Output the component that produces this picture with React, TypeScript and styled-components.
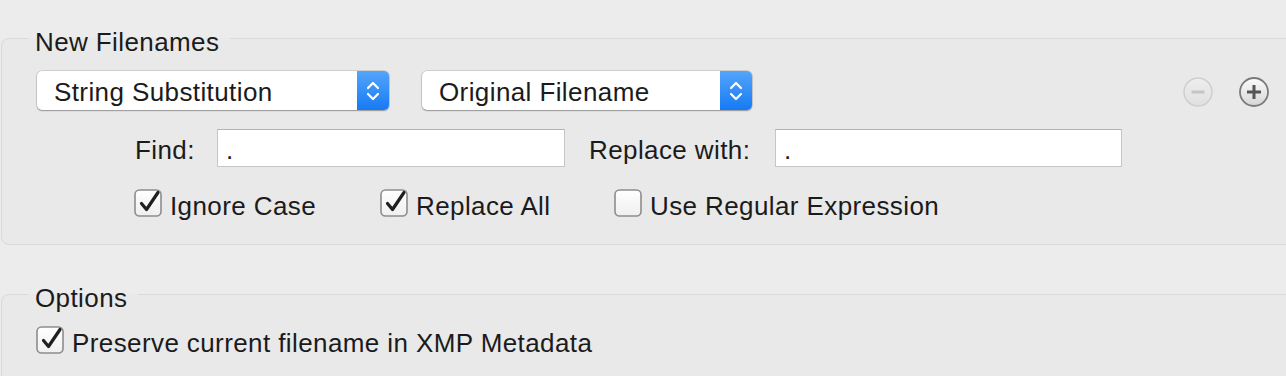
import React from 'react';
import styled, { createGlobalStyle } from 'styled-components';

const GlobalStyle = createGlobalStyle`
  html, body {
    margin: 0;
    padding: 0;
    background: #ececec;
  }
  body {
    font-family: "Liberation Sans", Arial, sans-serif;
    color: #1b1b1b;
  }
`;

const Window = styled.div`
  width: 1286px;
  height: 376px;
  overflow: hidden;
  box-sizing: border-box;
  padding: 20px 0 0 1px;
  font-size: 26px;
  letter-spacing: 0.4px;
`;

const Group = styled.fieldset<{ $top?: number }>`
  margin: ${p => p.$top ?? 0}px -24px 0 0;
  padding: 0;
  min-width: 0;
  border: 1px solid #d9d9d9;
  border-radius: 8px;
  background: #e9e9e9;
`;

const Legend = styled.legend`
  margin-left: 26px;
  padding: 7px 11px 0 7px;
  line-height: 30px;
  font-size: 26px;
`;

const Content = styled.div<{ $pad: string }>`
  display: flex;
  flex-direction: column;
  padding: ${p => p.$pad};
`;

const Row = styled.div<{ $top?: number; $left?: number }>`
  display: flex;
  align-items: center;
  margin-top: ${p => p.$top ?? 0}px;
  margin-left: ${p => p.$left ?? 0}px;
`;

const Popup = styled.button<{ $width: number }>`
  width: ${p => p.$width}px;
  height: 39px;
  flex: none;
  display: flex;
  align-items: stretch;
  margin: 0 33px 0 0;
  padding: 0;
  border: none;
  border-radius: 5px;
  background: #fff;
  box-shadow: 0 0 0 0.5px rgba(0, 0, 0, 0.22), 0 1px 1.5px rgba(0, 0, 0, 0.28);
  font: inherit;
  letter-spacing: inherit;
  color: inherit;
  overflow: hidden;
  cursor: default;
`;

const PopupLabel = styled.span`
  flex: 1;
  text-align: left;
  padding: 4px 0 0 17px;
  line-height: 35px;
  white-space: nowrap;
`;

const PopupArrows = styled.span`
  width: 32px;
  flex: none;
  display: flex;
  align-items: center;
  justify-content: center;
  background: linear-gradient(#54a5fb, #167af4);
`;

const RoundButtons = styled.div`
  margin-left: auto;
  margin-top: 3px;
  display: flex;
  gap: 26px;
`;

const RoundButton = styled.button`
  width: 30px;
  height: 30px;
  padding: 0;
  border: none;
  background: none;
  display: block;
  cursor: default;
`;

const FieldLabel = styled.label<{ $width: number }>`
  width: ${p => p.$width}px;
  flex: none;
  padding-top: 4px;
  line-height: 34px;
  white-space: nowrap;
`;

const TextField = styled.input<{ $width: number }>`
  width: ${p => p.$width}px;
  height: 38px;
  flex: none;
  box-sizing: border-box;
  margin: 0 24px 0 0;
  padding: 5px 8px 0;
  border: 1px solid #c6c6c6;
  border-top-color: #b4b4b4;
  background: #fff;
  font: inherit;
  letter-spacing: inherit;
  color: inherit;
  outline: none;
`;

const CheckItem = styled.label<{ $width?: number }>`
  display: flex;
  align-items: center;
  gap: 8px;
  width: ${p => (p.$width ? `${p.$width}px` : 'auto')};
  flex: none;
  white-space: nowrap;
`;

const CheckText = styled.span`
  padding-top: 3px;
  margin-bottom: -3px;
  line-height: 28px;
`;

const Box = styled.svg`
  display: block;
  flex: none;
  overflow: visible;
`;

const Chevrons = () => (
  <svg width="14" height="20" viewBox="0 0 14 20">
    <polyline points="2,7 7,2 12,7" fill="none" stroke="#fff" strokeWidth="2.2" strokeLinecap="round" strokeLinejoin="round" />
    <polyline points="2,13 7,18 12,13" fill="none" stroke="#fff" strokeWidth="2.2" strokeLinecap="round" strokeLinejoin="round" />
  </svg>
);

const Select = ({ width, value }: { width: number; value: string }) => (
  <Popup $width={width}>
    <PopupLabel>{value}</PopupLabel>
    <PopupArrows>
      <Chevrons />
    </PopupArrows>
  </Popup>
);

const Check = ({ checked, label, width }: { checked: boolean; label: string; width?: number }) => (
  <CheckItem $width={width}>
    <Box width="28" height="28" viewBox="0 0 28 28">
      <defs>
        <linearGradient id="cbFill" x1="0" y1="0" x2="0" y2="1">
          <stop offset="0" stopColor="#ffffff" />
          <stop offset="1" stopColor="#efefef" />
        </linearGradient>
      </defs>
      <rect x="1" y="1" width="26" height="26" rx="4.5" fill="url(#cbFill)" stroke="#8d8d8d" strokeWidth="1.6" />
      {checked && (
        <path d="M7.5 14.5 L12.5 20.5 L24 3.5" fill="none" stroke="#1f1f1f" strokeWidth="3.2" strokeLinecap="round" strokeLinejoin="round" />
      )}
    </Box>
    <CheckText>{label}</CheckText>
  </CheckItem>
);

const MinusIcon = () => (
  <Box width="30" height="30" viewBox="0 0 30 30">
    <defs>
      <linearGradient id="minusFill" x1="0" y1="0" x2="0" y2="1">
        <stop offset="0" stopColor="#eeeeee" />
        <stop offset="1" stopColor="#e0e0e0" />
      </linearGradient>
    </defs>
    <circle cx="15" cy="15" r="14" fill="url(#minusFill)" stroke="#cfcfcf" strokeWidth="1.5" />
    <line x1="8.5" y1="15" x2="21.5" y2="15" stroke="#c4c4c4" strokeWidth="3" />
  </Box>
);

const PlusIcon = () => (
  <Box width="30" height="30" viewBox="0 0 30 30">
    <defs>
      <linearGradient id="plusFill" x1="0" y1="0" x2="0" y2="1">
        <stop offset="0" stopColor="#fbfbfb" />
        <stop offset="1" stopColor="#d6d6d6" />
      </linearGradient>
    </defs>
    <circle cx="15" cy="15" r="14" fill="url(#plusFill)" stroke="#7b7b7b" strokeWidth="1.8" />
    <line x1="8" y1="15" x2="22" y2="15" stroke="#555" strokeWidth="3" />
    <line x1="15" y1="8" x2="15" y2="22" stroke="#555" strokeWidth="3" />
  </Box>
);

export default function App() {
  return (
    <>
      <GlobalStyle />
      <Window>
        <Group>
          <Legend>New Filenames</Legend>
          <Content $pad="14px 40px 27px 35px">
            <Row>
              <Select width={352} value="String Substitution" />
              <Select width={330} value="Original Filename" />
              <RoundButtons>
                <RoundButton aria-label="Remove" disabled>
                  <MinusIcon />
                </RoundButton>
                <RoundButton aria-label="Add">
                  <PlusIcon />
                </RoundButton>
              </RoundButtons>
            </Row>
            <Row $top={19} $left={98}>
              <FieldLabel $width={82}>Find:</FieldLabel>
              <TextField $width={348} defaultValue="." />
              <FieldLabel $width={186}>Replace with:</FieldLabel>
              <TextField $width={347} defaultValue="." />
            </Row>
            <Row $top={22} $left={97}>
              <Check checked width={246} label="Ignore Case" />
              <Check checked width={234} label="Replace All" />
              <Check checked={false} label="Use Regular Expression" />
            </Row>
          </Content>
        </Group>
        <Group $top={31}>
          <Legend>Options</Legend>
          <Content $pad="13px 40px 40px 34px">
            <Row>
              <Check checked label="Preserve current filename in XMP Metadata" />
            </Row>
          </Content>
        </Group>
      </Window>
    </>
  );
}
